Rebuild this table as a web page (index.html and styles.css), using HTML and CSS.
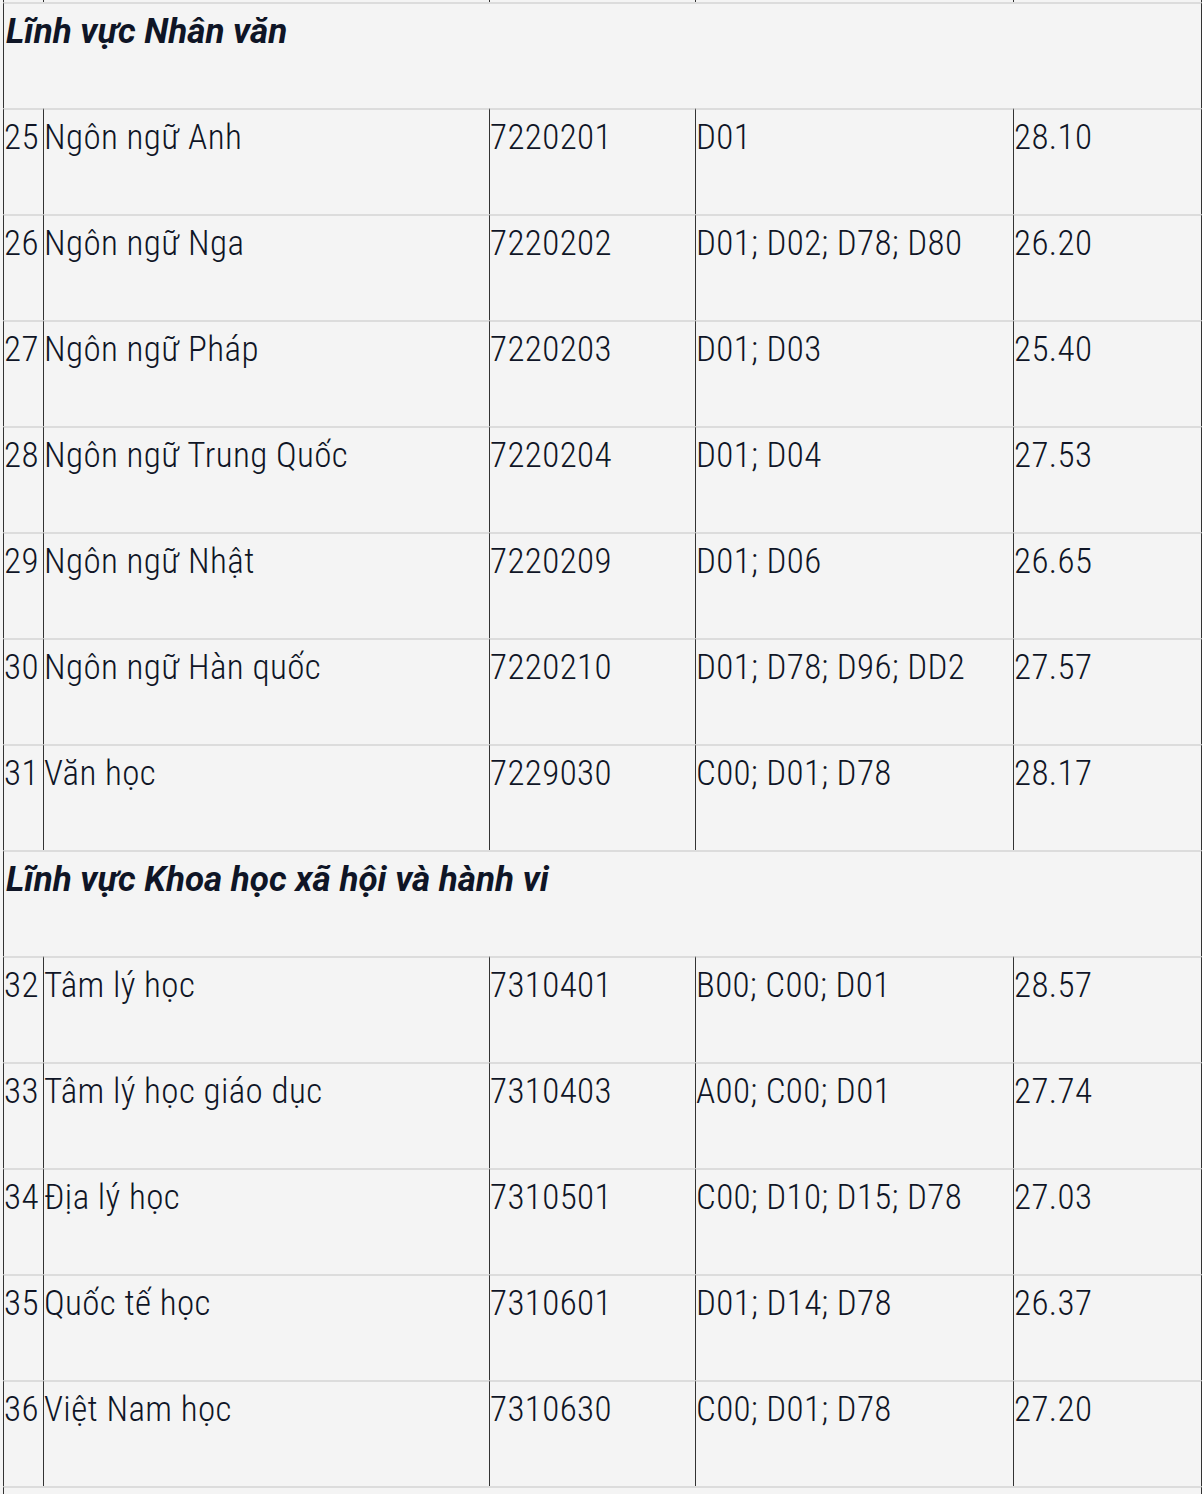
FILE: index.html
```html
<!DOCTYPE html>
<html lang="vi">
<head>
<meta charset="utf-8">
<title>Điểm chuẩn</title>
<link rel="stylesheet" href="styles.css">
</head>
<body>
<table class="scores">
  <tbody>
    <tr class="sliver">
      <td class="c-no"></td><td class="c-name"></td><td class="c-code"></td><td class="c-combo"></td><td class="c-score"></td>
    </tr>
    <tr class="row section"><td colspan="5"><em>Lĩnh vực Nhân văn</em></td></tr>
    <tr class="row"><td>25</td><td>Ngôn ngữ Anh</td><td>7220201</td><td>D01</td><td>28.10</td></tr>
    <tr class="row"><td>26</td><td>Ngôn ngữ Nga</td><td>7220202</td><td>D01; D02; D78; D80</td><td>26.20</td></tr>
    <tr class="row"><td>27</td><td>Ngôn ngữ Pháp</td><td>7220203</td><td>D01; D03</td><td>25.40</td></tr>
    <tr class="row"><td>28</td><td>Ngôn ngữ Trung Quốc</td><td>7220204</td><td>D01; D04</td><td>27.53</td></tr>
    <tr class="row"><td>29</td><td>Ngôn ngữ Nhật</td><td>7220209</td><td>D01; D06</td><td>26.65</td></tr>
    <tr class="row"><td>30</td><td>Ngôn ngữ Hàn quốc</td><td>7220210</td><td>D01; D78; D96; DD2</td><td>27.57</td></tr>
    <tr class="row"><td>31</td><td>Văn học</td><td>7229030</td><td>C00; D01; D78</td><td>28.17</td></tr>
    <tr class="row section"><td colspan="5"><em>Lĩnh vực Khoa học xã hội và hành vi</em></td></tr>
    <tr class="row"><td>32</td><td>Tâm lý học</td><td>7310401</td><td>B00; C00; D01</td><td>28.57</td></tr>
    <tr class="row"><td>33</td><td>Tâm lý học giáo dục</td><td>7310403</td><td>A00; C00; D01</td><td>27.74</td></tr>
    <tr class="row"><td>34</td><td>Địa lý học</td><td>7310501</td><td>C00; D10; D15; D78</td><td>27.03</td></tr>
    <tr class="row"><td>35</td><td>Quốc tế học</td><td>7310601</td><td>D01; D14; D78</td><td>26.37</td></tr>
    <tr class="row"><td>36</td><td>Việt Nam học</td><td>7310630</td><td>C00; D01; D78</td><td>27.20</td></tr>
    <tr class="row section"><td colspan="5"></td></tr>
  </tbody>
</table>
</body>
</html>
```
FILE: styles.css
```css
html, body {
  margin: 0;
  padding: 0;
  background: #f4f4f4;
}
body {
  padding-left: 3px;
  font-family: "Roboto", "Open Sans", sans-serif;
  font-stretch: condensed;
  font-weight: 300;
  font-size: 35px;
  letter-spacing: 0.4px;
  line-height: 48px;
  color: #0f1526;
}
.scores {
  width: 1199px;
  table-layout: fixed;
  border-collapse: separate;
  border-spacing: 0;
}
.scores td {
  box-sizing: border-box;
  border-left: 1px solid #333;
  border-top: 2px solid #dcdcdc;
  padding: 4px 0 0 0;
  vertical-align: top;
  white-space: nowrap;
}
.scores td:last-child {
  border-right: 1px solid #333;
}
.sliver {
  height: 2px;
}
.sliver td {
  border-top: 0;
  padding: 0;
  height: 2px;
}
.c-no { width: 40px; }
.c-name { width: 446px; }
.c-code { width: 206px; }
.c-combo { width: 318px; }
.c-score { width: 189px; }
.row {
  height: 106px;
}
.section td {
  padding-left: 2px;
}
.section em {
  font-weight: 700;
  font-style: italic;
  font-stretch: normal;
  letter-spacing: 0;
}
```
